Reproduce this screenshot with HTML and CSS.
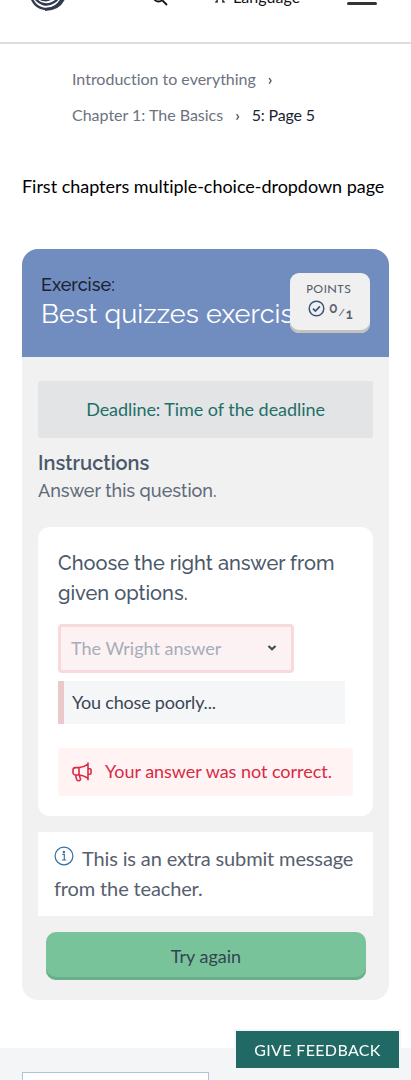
FILE: index.html
```html
<!DOCTYPE html>
<html lang="en">
<head>
<meta charset="utf-8">
<meta name="viewport" content="width=device-width, initial-scale=1">
<title>5: Page 5</title>
<link rel="stylesheet" href="styles.css">
</head>
<body>
<header class="topbar">
  <svg class="logo" width="38" height="42" viewBox="0 0 38 42" fill="none" stroke="#303b4d">
    <ellipse cx="19" cy="22" rx="16.5" ry="18" stroke-width="2.4" transform="rotate(12 19 22)"/>
    <ellipse cx="18.5" cy="20.500" rx="14" ry="14.8" stroke-width="2.400" transform="rotate(15 18 22)"/>
    <ellipse cx="17.5" cy="21" rx="10" ry="10.6" stroke-width="2" transform="rotate(15 18 22)"/>
    <path d="M36 29C33 36 27 40.500 17 40.500" stroke-width="2.8"/>
  </svg>
  <svg class="search" width="16" height="16" viewBox="0 0 16 16" fill="none" stroke="#111" stroke-width="1.8"><circle cx="6.5" cy="6.5" r="5"/><path d="M10.3 10.3L15 15"/></svg>
  <div class="language">
    <svg width="16" height="16" viewBox="0 0 16 16" fill="none" stroke="#111" stroke-width="1.2"><path d="M1 3.5h8M5 1v2.500M2 9c3-1 5-3 5.500-5.500M3 4c.6 2.500 2 4 4 5M5.500 15L9 6l3.500 9M7 11.500h4M4 15h3M11 15h3"/></svg>
    <span>Language</span>
  </div>
  <div class="burger"><i></i><i></i><i></i></div>
</header>
<nav class="crumbs">
  <div class="crumb-row"><span>Introduction to everything</span><b>›</b></div>
  <div class="crumb-row"><span>Chapter 1: The Basics</span><b>›</b><span class="current">5: Page 5</span></div>
</nav>
<main>
  <p class="intro">First chapters multiple-choice-dropdown page</p>
  <section class="exercise">
    <div class="exercise-head">
      <div class="kicker">Exercise:</div>
      <div class="title">Best quizzes exercise</div>
      <div class="points">
        <div class="points-label">POINTS</div>
        <div class="score">
          <svg width="17" height="17" viewBox="0 0 17 17" fill="none" stroke="#39537f" stroke-width="1.5"><circle cx="8.500" cy="8.500" r="7.300"/><path d="M5 8.700l2.400 2.400 4.500-4.800" stroke-width="1.700"/></svg>
          <span class="got">0</span><span class="slash">/</span><span class="max">1</span>
        </div>
      </div>
    </div>
    <div class="exercise-body">
      <div class="deadline">Deadline: Time of the deadline</div>
      <h3 class="instructions">Instructions</h3>
      <p class="assignment">Answer this question.</p>
      <div class="quiz">
        <p class="question"><span class="line-one">Choose the right answer from</span> <span class="line-two">given options.</span></p>
        <div class="select"><span>The Wright answer</span>
          <svg width="10" height="8" viewBox="0 0 10 8" fill="none" stroke="#404b59" stroke-width="2.200"><path d="M1.500 2L5 5.200 8.500 2"/></svg>
        </div>
        <div class="feedback">You chose poorly...</div>
        <div class="result">
          <svg width="20" height="20" viewBox="0 0 20 20" fill="none" stroke="#d92a43" stroke-width="1.600" stroke-linejoin="round" stroke-linecap="round"><path d="M16 1v16.800M16 2.200C13 4.500 10 5.600 7 5.600H3.500A2.500 2.500 0 0 0 1 8.100v2.400a2.500 2.500 0 0 0 2.500 2.500H7c3 0 6 1.300 9 3.400M7 5.600v7.400M16 6.700h2a1 1 0 0 1 1 1v3.600a1 1 0 0 1-1 1h-2M3.800 13c0 2 .3 3.600 1.200 5 .9 1.200 3.600.9 3.600-.9-.9-1.200-1.200-2.300-.9-4.100"/></svg>
          <span>Your answer was not correct.</span>
        </div>
      </div>
      <div class="message"><svg width="20" height="20" viewBox="0 0 20 20" fill="none" stroke="#37709f" stroke-width="1.200"><circle cx="10" cy="10" r="8.900"/><path d="M8.300 8.300h2v5.500M7.900 14h4.300"/><circle cx="9.900" cy="5.900" r=".6" fill="#37709f"/></svg><span>This is an extra submit message from the teacher.</span></div>
      <div class="retry">Try again</div>
    </div>
  </section>
</main>
<footer class="footer"><div class="footer-box"></div></footer>
<div class="give-feedback">GIVE FEEDBACK</div>
</body>
</html>
```
FILE: styles.css
```css
* { box-sizing: border-box; }
html { overflow: hidden; }
body { margin: 0; height: 1080px; overflow: hidden; background: #fff; font-family: Lato, sans-serif; font-variant-ligatures: no-common-ligatures; color: #111; }
h3, p { margin: 0; font-weight: 400; }
svg { flex: none; }
.topbar { height: 78px; margin-top: -34px; border-bottom: 2px solid #ddd; display: flex; align-items: flex-start; padding-left: 28px; }
.logo { margin-top: 3px; }
.search { margin: 24px 0 0 86px; }
.language { display: flex; gap: 6px; margin: 19px 0 0 43px; font-size: 16px; line-height: 24px; letter-spacing: .05px; }
.language svg { margin-top: 2px; }
.burger { display: flex; flex-direction: column; gap: 7px; margin: 16px 0 0 47px; }
.burger i { width: 30px; height: 3px; border-radius: 2px; background: #333; }
.crumbs { padding: 17px 0 0 72px; font-size: 16px; line-height: 36px; letter-spacing: -.01px; color: #6b7280; }
.crumb-row { display: flex; white-space: nowrap; }
.crumb-row b { font-weight: 400; color: #1a2333; margin: 0 12px; }
.current { color: #1a2333; letter-spacing: -.15px; }
.intro { margin: 38px 22px 0; height: 78px; font-size: 18px; line-height: 30px; letter-spacing: -.03px; color: #000; white-space: nowrap; }
.exercise { width: 367px; margin: 0 22px; border-radius: 16px; background: #f1f1f1; overflow: hidden; height: 751px; }
.exercise-head { position: relative; height: 108px; background: #718dbf; padding: 24px 19px 0; white-space: nowrap; }
.kicker, .title, .instructions, .assignment, .question { font-family: Raleway, Lato, sans-serif; font-weight: 500; }
.kicker { font-size: 18px; line-height: 24px; color: #1a2333; }
.title { font-size: 27px; line-height: 34px; font-weight: 400; letter-spacing: .12px; color: #fff; }
.points { position: absolute; right: 19px; top: 24px; width: 80px; height: 60px; border-radius: 9px; background: #f0f0f0; box-shadow: inset 0 -3px 0 #c2c2be; padding-top: 8px; text-align: center; color: #57606f; }
.points-label { font-family: "Josefin Sans", Lato, sans-serif; font-size: 12px; line-height: 19px; padding-right: 3px; }
.score { display: flex; justify-content: flex-start; align-items: flex-start; padding-left: 18px; line-height: 16px; font-size: 14px; font-family: Raleway, Lato, sans-serif; font-weight: 600; }
.score svg { margin-right: 4px; }
.slash { font-size: 10px; font-weight: 500; padding: 5px 0 0 1px; }
.max { padding: 6px 0 0 1px; }
.exercise-body { padding: 24px 16px 0; }
.deadline { height: 57px; border-radius: 3px; background: #e2e4e6; color: #1f6f68; text-align: center; font-size: 18px; line-height: 57px; letter-spacing: -.06px; }
.instructions { margin-top: 10px; font-size: 20px; line-height: 30px; font-weight: 600; color: #4b586a; white-space: nowrap; }
.assignment { font-size: 18px; line-height: 26px; color: #606b7a; white-space: nowrap; }
.quiz { height: 289px; margin-top: 23px; border-radius: 12px; background: #fff; padding: 21px 20px 0; }
.question { font-size: 20px; line-height: 30px; color: #4b586a; white-space: nowrap; }
.line-one, .line-two { display: block; width: max-content; }
.select { width: 236px; height: 49px; margin-top: 16px; border: 3px solid #f8dadd; border-radius: 4px; background: #fcf2f3; display: flex; align-items: center; justify-content: space-between; padding: 0 14px 2px 10px; font-size: 18px; color: #a5adb8; }
.feedback { width: 287px; height: 43px; margin-top: 8px; border-left: 6px solid #ebc8cc; background: #f5f6f8; padding-left: 8px; font-size: 18px; line-height: 43px; letter-spacing: -.2px; color: #3b4656; }
.result { height: 48px; margin-top: 24px; border-radius: 4px; background: #fff3f4; color: #d92a43; display: flex; align-items: center; gap: 13px; padding-left: 14px; font-size: 18px; letter-spacing: -.03px; white-space: nowrap; }
.result span { padding-bottom: 2px; }
.message { height: 84px; margin-top: 16px; background: #fff; padding: 11px 0 0 16px; font-size: 20px; line-height: 30px; letter-spacing: -.14px; color: #57606f; }
.message svg { margin-right: 8px; vertical-align: 0; }
.retry { width: 320px; height: 48px; margin: 16px 0 0 8px; border-radius: 10px; background: #79c39b; box-shadow: inset 0 -3px 0 #68af8b; text-align: center; font-size: 18px; line-height: 48px; color: #344353; }
.footer { height: 32px; margin-top: 48px; background: #f3f5f7; padding: 24px 22px 0; }
.footer-box { width: 187px; height: 40px; background: #fff; border: 1px solid #adc4dc; }
.give-feedback { position: fixed; right: 12px; top: 1031px; width: 163px; height: 37px; background: #206964; box-shadow: 0 0 0 2px #f3f5f7; color: #fff; text-align: center; font-size: 16px; line-height: 37px; letter-spacing: .35px; }
```
